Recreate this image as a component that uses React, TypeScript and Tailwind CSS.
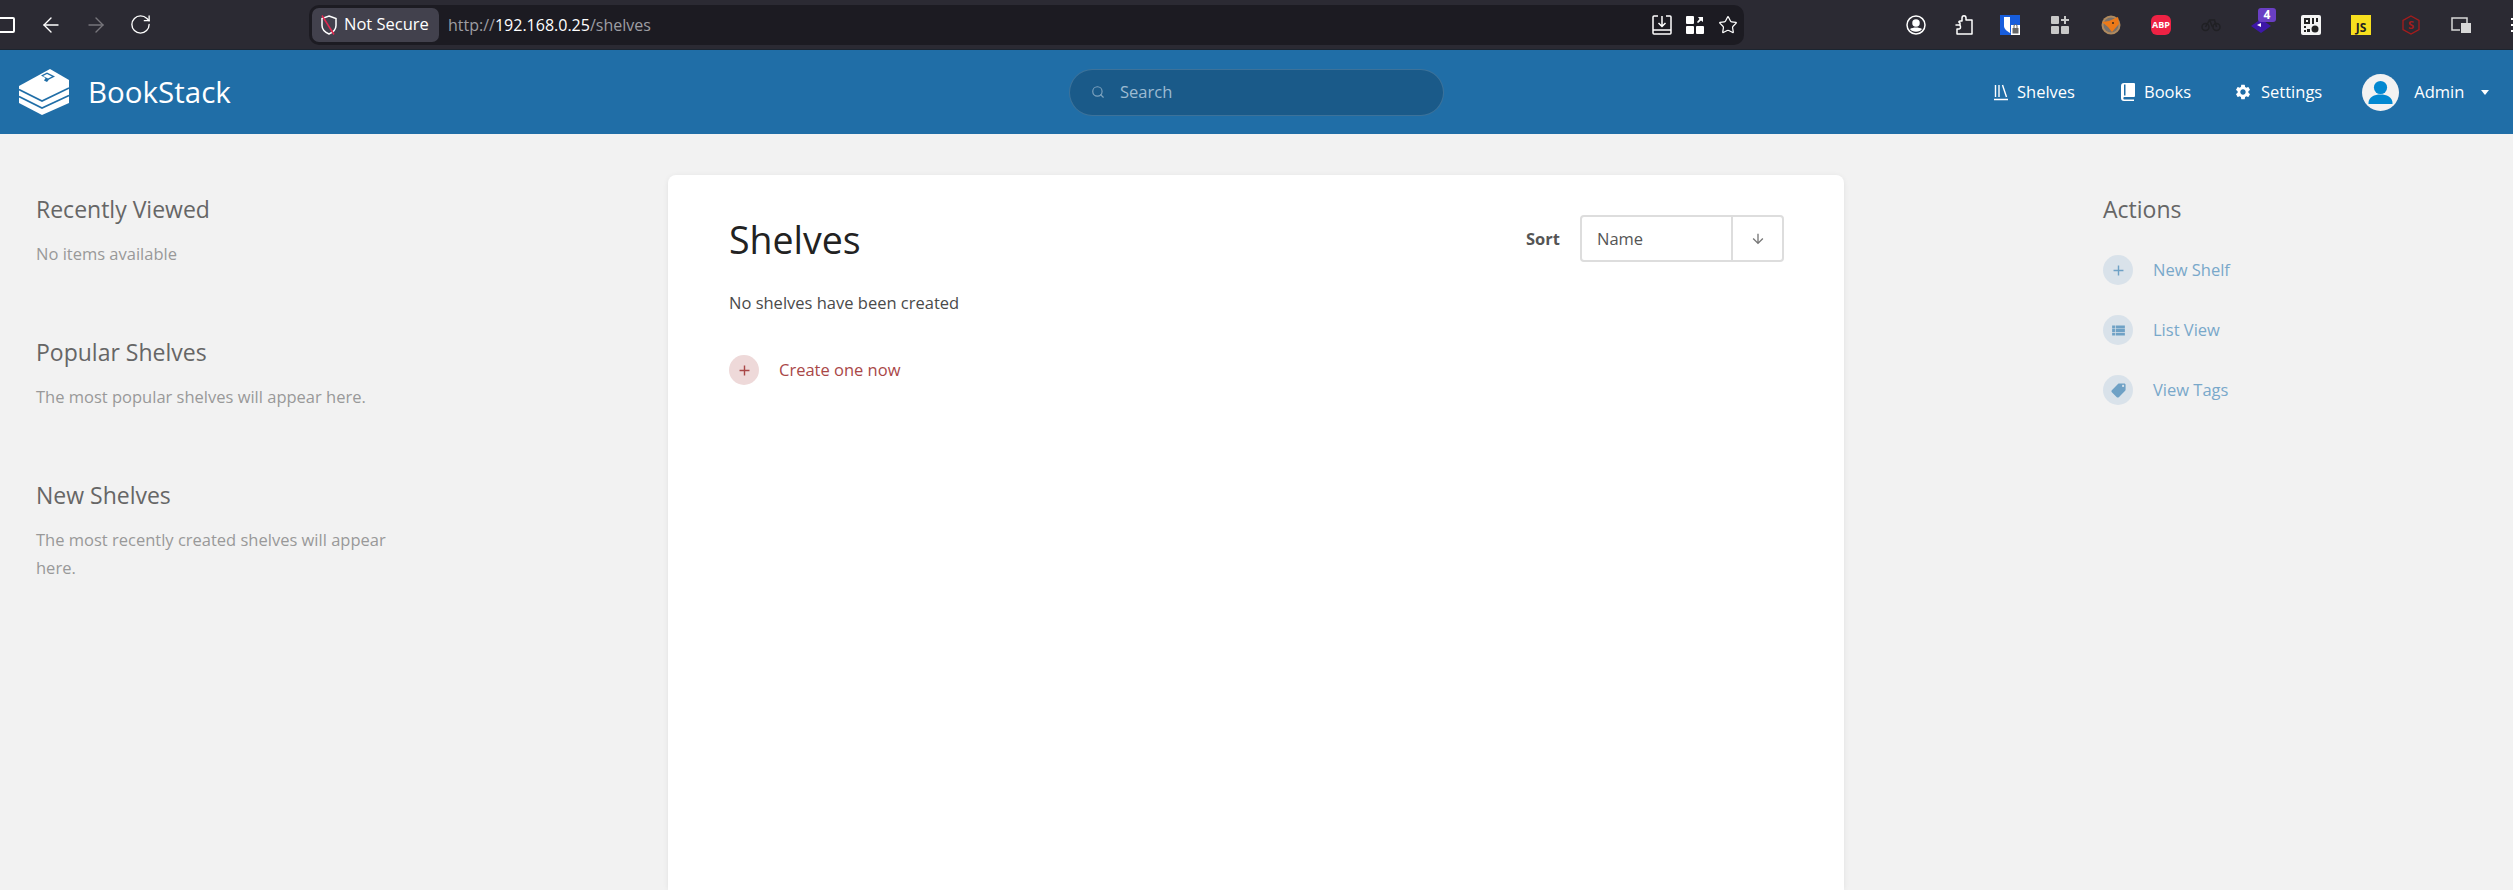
import { ArrowLeft, ArrowRight, RotateCw, Star, Search } from "lucide-react";
import { MdSettings, MdLocalOffer, MdViewList, MdArrowDownward, MdAdd } from "react-icons/md";

function Logo() {
  return (
    <svg width="51" height="48" viewBox="0 0 51 48" className="shrink-0">
      <polygon points="31,1 50,12 50,35 23,47 0,35 0,18" fill="#fff" />
      <polyline points="0,21.5 23,33 50,20" fill="none" stroke="#206ea7" strokeWidth="1.6" />
      <polyline points="0,28.5 23,40 50,27.5" fill="none" stroke="#206ea7" strokeWidth="1.6" />
      <polygon points="22,7.5 28,4.5 36,8.5 30,11.5 28,14 25,12.5 26.5,10" fill="#206ea7" />
      <polygon points="24,8 28,6 33,8.5 29,10.5" fill="#fff" />
    </svg>
  );
}

function ShelvesIcon() {
  return (
    <svg width="14" height="17" viewBox="0 0 14 17" fill="none" stroke="#fff" strokeWidth="1.4">
      <path d="M1.5 1v12M5 1v12M8.5 1l4 12M0 15.5h14" />
    </svg>
  );
}

function BooksIcon() {
  return (
    <svg width="14" height="18" viewBox="0 0 14 18" fill="#fff">
      <path d="M3 0h10a1 1 0 0 1 1 1v12a1 1 0 0 1-1 1H3a1.5 1.5 0 0 0 0 2.5h10V18H3a3 3 0 0 1-3-3V3a3 3 0 0 1 3-3z" />
      <path d="M3 1.5h1.5V12.4H3z" fill="#206ea7" />
    </svg>
  );
}

function Avatar() {
  return (
    <svg width="37" height="37" viewBox="0 0 37 37" className="shrink-0">
      <circle cx="18.5" cy="18.5" r="18.5" fill="#f2f2f2" />
      <circle cx="18.5" cy="13.5" r="6.6" fill="#0288d1" />
      <path d="M6.5 29c0-6 6-8.5 12-8.5s12 2.5 12 8.5v1h-24z" fill="#0288d1" />
    </svg>
  );
}

function ToolbarIcons() {
  return (
    <div className="flex items-center">
      {/* account */}
      <span className="flex w-[50px] justify-center">
        <svg width="20" height="20" viewBox="0 0 20 20" fill="none" stroke="#fff" strokeWidth="1.5">
          <circle cx="10" cy="10" r="9" />
          <circle cx="10" cy="8" r="3" fill="#fff" />
          <path d="M4 14c3-2 9-2 12 0-2 3.5-10 3.5-12 0z" fill="#fff" stroke="none" />
        </svg>
      </span>
      {/* extensions */}
      <span className="flex w-[45px] justify-center">
        <svg width="18" height="20" viewBox="0 0 18 20" fill="none" stroke="#fff" strokeWidth="1.5" strokeLinejoin="round">
          <path d="M1 10h4V8c-2-1-1-2 .5-2H7V3c0-3 4-3 4 0v2h6v14H2V14h2c2 0 2-4 0-4z" />
        </svg>
      </span>
      {/* bitwarden style */}
      <span className="flex w-[48px] justify-center">
        <svg width="20" height="20" viewBox="0 0 20 20">
          <rect width="20" height="20" fill="#175ddc" />
          <path d="M4 2h12v9c0 3-3 5-6 7-3-2-6-4-6-7z" fill="#fff" />
          <path d="M10 2h6v9c0 3-3 5-6 7z" fill="#175ddc" />
          <rect x="11" y="10" width="9" height="10" fill="#fff" />
          <rect x="12.5" y="13" width="6" height="5.5" fill="#666" />
          <path d="M14 13v-2a1.5 1.5 0 0 1 3 0v2" fill="none" stroke="#666" strokeWidth="1" />
        </svg>
      </span>
      {/* add-on grid */}
      <span className="flex w-[52px] justify-center">
        <svg width="18" height="18" viewBox="0 0 18 18" fill="#c8c8c8">
          <rect width="8" height="8" rx="1" />
          <rect y="10" width="8" height="8" rx="1" />
          <rect x="10" y="10" width="8" height="8" rx="1" />
          <path d="M13 0h2v3h3v2h-3v3h-2V5h-3V3h3z" />
        </svg>
      </span>
      {/* fox */}
      <span className="flex w-[50px] justify-center">
        <svg width="20" height="20" viewBox="0 0 20 20">
          <circle cx="10" cy="10" r="9.5" fill="#b08a5e" />
          <circle cx="10" cy="10" r="7.5" fill="#77706c" />
          <path d="M1 7l7-1 9-4 1 7-7 8-4-5z" fill="#ee7a18" />
          <circle cx="12" cy="8" r="1" fill="#3a2a1c" />
        </svg>
      </span>
      {/* adblock */}
      <span className="flex w-[50px] justify-center">
        <span className="flex h-5 w-5 items-center justify-center rounded-md bg-[#ee2244] text-[9px] leading-none font-bold text-white">ABP</span>
      </span>
      {/* faint bike */}
      <span className="flex w-[50px] justify-center">
        <svg width="20" height="18" viewBox="0 0 20 18" fill="none" stroke="#202024" strokeWidth="1.5">
          <circle cx="4.5" cy="11" r="3.5" />
          <circle cx="15.5" cy="11" r="3.5" />
          <path d="M4.5 11l4-7h5l2 7M8.5 4l3 7" />
        </svg>
      </span>
      {/* badge */}
      <span className="flex w-[50px] justify-center">
        <span className="relative h-5 w-5">
          <svg width="20" height="20" viewBox="0 0 20 20" className="absolute top-0 left-0">
            <polygon points="10,4 20,11 10,18 0,11" fill="#3d17a8" />
            <path d="M6 10l4-2v4z" fill="#fff" />
          </svg>
          <span className="absolute -top-[7px] left-[7px] flex h-[14px] w-[18px] items-center justify-center rounded-[3px] bg-[#6a3fc4] text-[12px] leading-none font-bold text-white">4</span>
        </span>
      </span>
      {/* qr */}
      <span className="flex w-[50px] justify-center">
        <svg width="20" height="20" viewBox="0 0 20 20">
          <rect width="20" height="20" rx="2" fill="#f4f4f4" />
          <path d="M3 3h6v6H3zM5 5v2h2V5zM11 3h2v6h-2zM15 3h2v4h-2zM3 11h2v2H3zM6 14h3v3H6zM3 15h2v2H3z" fill="#222" fillRule="evenodd" />
          <circle cx="14" cy="14" r="3.5" fill="#222" />
        </svg>
      </span>
      {/* js */}
      <span className="flex w-[50px] justify-center">
        <span className="flex h-5 w-5 items-end justify-center bg-[#f7df1e] text-[12px] leading-[15px] font-bold text-[#222]">JS</span>
      </span>
      {/* s hexagon */}
      <span className="flex w-[50px] justify-center">
        <span className="relative flex h-5 w-5 items-center justify-center text-[11px] leading-none font-bold text-[#a61c1c]">
          <svg width="20" height="20" viewBox="0 0 20 20" fill="none" stroke="#a61c1c" strokeWidth="1.3" className="absolute inset-0">
            <polygon points="10,1 18,5.5 18,14.5 10,19 2,14.5 2,5.5" />
          </svg>
          S
        </span>
      </span>
      {/* pip */}
      <span className="flex w-[50px] justify-center">
        <svg width="20" height="18" viewBox="0 0 20 18" fill="none" stroke="#d8d8d8" strokeWidth="1.5">
          <path d="M9 14H1V2h15v5" />
          <rect x="10" y="7" width="10" height="10" fill="#d8d8d8" stroke="none" />
        </svg>
      </span>
      <span className="ml-[25px] flex w-[16px] flex-col gap-[4px]">
        <span className="h-[2px] w-[16px] bg-white" />
        <span className="h-[2px] w-[16px] bg-white" />
        <span className="h-[2px] w-[16px] bg-white" />
      </span>
    </div>
  );
}

function BrowserBar() {
  return (
    <div className="flex h-[50px] shrink-0 items-center overflow-hidden border-b border-[#1c2530] bg-[#2b2a33] text-white">
      <span className="ml-[-6px] h-[16px] w-[21px] shrink-0 rounded-[2px] border-2 border-white" />
      <ArrowLeft size={24} strokeWidth={1.4} className="ml-[24px] shrink-0" />
      <ArrowRight size={24} strokeWidth={1.4} className="ml-[21px] shrink-0 text-[#77767c]" />
      <RotateCw size={23} strokeWidth={1.4} className="ml-[21px] shrink-0" />
      <div className="ml-[157px] flex h-[40px] w-[1435px] shrink-0 items-center rounded-[10px] bg-[#1c1b22] pl-[3px]">
        <div className="flex h-[34px] w-[127px] items-center rounded-[7px] bg-[#42414d] pl-[7px] text-[16.5px]">
          <svg width="20" height="22" viewBox="0 0 20 22" fill="none" className="mr-[5px] shrink-0">
            <path d="M10 2l7 2.5v7c0 4-3.5 7-7 8.5-3.5-1.5-7-4.5-7-8.5v-7z" stroke="#fff" strokeWidth="1.5" />
            <path d="M3 1.5l12 19" stroke="#e22850" strokeWidth="1.5" />
          </svg>
          Not Secure
        </div>
        <div className="ml-[9px] text-[16px] text-[#9e9ea3]">
          http://<span className="text-white">192.168.0.25</span>/shelves
        </div>
        <div className="ml-auto mr-[6px] flex items-center gap-[14px]">
          <svg width="20" height="20" viewBox="0 0 20 20" fill="none" stroke="#fff" strokeWidth="1.5">
            <path d="M6 1H2a1 1 0 0 0-1 1v16a1 1 0 0 0 1 1h16a1 1 0 0 0 1-1V2a1 1 0 0 0-1-1h-4" />
            <path d="M1 15h18M10 1v10M6.5 8l3.5 3.5L13.5 8" />
          </svg>
          <svg width="18" height="18" viewBox="0 0 18 18" fill="#fff">
            <rect width="8" height="8" rx="1" />
            <rect y="10" width="8" height="8" rx="1" />
            <rect x="10" y="10" width="8" height="8" rx="1" />
            <path d="M12 1h5v5l-2-1.5L12 7l-1-1 2.5-3z" />
          </svg>
          <Star size={20} strokeWidth={1.5} />
        </div>
      </div>
      <div className="ml-[147px] shrink-0">
        <ToolbarIcons />
      </div>
    </div>
  );
}

function Header() {
  return (
    <header className="flex h-[84px] shrink-0 items-center bg-[#206ea7] text-white">
      <div className="flex w-[1069px] items-center pl-[19px]">
        <Logo />
        <span className="ml-[18px] text-[29.5px] leading-none">BookStack</span>
      </div>
      <div className="flex h-[47px] w-[375px] items-center rounded-full border border-[#ffffff26] bg-[#1a5a89] pl-[21px] text-[16.5px] text-[#9dbbd2]">
        <Search size={14} strokeWidth={2} className="text-[#7ea3bf]" />
        <span className="ml-[15px]">Search</span>
      </div>
      <nav className="ml-[550px] flex items-center text-[16.5px]">
        <span className="flex items-center gap-[9px]"><ShelvesIcon />Shelves</span>
        <span className="ml-[46px] flex items-center gap-[9px]"><BooksIcon />Books</span>
        <span className="ml-[43px] flex items-center gap-[9px]"><MdSettings size={18} />Settings</span>
        <span className="ml-[40px] flex items-center"><Avatar /><span className="ml-[15px]">Admin</span></span>
        <span className="ml-[17px] h-0 w-0 border-x-[4px] border-t-[5px] border-x-transparent border-t-white" />
      </nav>
    </header>
  );
}

function SideBlock({ title, children, className }: { title: string; children: React.ReactNode; className?: string }) {
  return (
    <section className={className}>
      <h5 className="text-[23px] leading-[30px] text-[#666]">{title}</h5>
      <p className="mt-[16px] text-[16.5px] leading-[28px] text-[#999]">{children}</p>
    </section>
  );
}

function ActionLink({ icon, label }: { icon: React.ReactNode; label: string }) {
  return (
    <div className="flex h-[30px] items-center text-[16.5px] text-[#79a8ca]">
      <span className="flex h-[30px] w-[30px] items-center justify-center rounded-full bg-[#d9e2ea] text-[#6fa1c5]">{icon}</span>
      <span className="ml-[20px]">{label}</span>
    </div>
  );
}

export default function App() {
  return (
    <div className="flex h-[890px] flex-col overflow-hidden bg-[#f2f2f2] font-['Open_Sans','Noto_Sans',sans-serif]">
      <BrowserBar />
      <Header />
      <main className="flex min-h-0 flex-1">
        <aside className="w-[668px] shrink-0 pt-[60px] pl-[36px]">
          <div className="w-[360px]">
            <SideBlock title="Recently Viewed">No items available</SideBlock>
            <SideBlock title="Popular Shelves" className="mt-[69px]">The most popular shelves will appear here.</SideBlock>
            <SideBlock title="New Shelves" className="mt-[69px]">The most recently created shelves will appear here.</SideBlock>
          </div>
        </aside>
        <div className="mt-[41px] w-[1176px] shrink-0 rounded-t-[8px] bg-white pt-[40px] pr-[60px] pl-[61px] shadow-[0_1px_6px_-1px_rgba(0,0,0,0.1)]">
          <div className="flex items-start justify-between">
            <h1 className="text-[37.5px] leading-[50px] text-[#222]">Shelves</h1>
            <div className="flex items-center">
              <span className="mt-[1px] mr-[20px] text-[16.5px] font-bold text-[#555]">Sort</span>
              <div className="flex h-[47px] w-[204px] items-center rounded-[4px] border-2 border-[#ddd] text-[16.5px] text-[#555]">
                <span className="w-[151px] border-r-2 border-[#ddd] pl-[15px] leading-[43px]">Name</span>
                <span className="flex flex-1 justify-center text-[#777]"><MdArrowDownward size={16} /></span>
              </div>
            </div>
          </div>
          <p className="mt-[24px] text-[16.5px] leading-[28px] text-[#4a4a4a]">No shelves have been created</p>
          <div className="mt-[38px] flex h-[30px] items-center text-[16.5px] text-[#a94747]">
            <span className="flex h-[30px] w-[30px] items-center justify-center rounded-full bg-[#eed9d9]"><MdAdd size={17} /></span>
            <span className="ml-[20px]">Create one now</span>
          </div>
        </div>
        <aside className="flex-1 pt-[60px] pl-[259px]">
          <h5 className="text-[23px] leading-[30px] text-[#666]">Actions</h5>
          <div className="mt-[31px] flex flex-col gap-[30px]">
            <ActionLink icon={<MdAdd size={17} />} label="New Shelf" />
            <ActionLink icon={<MdViewList size={17} />} label="List View" />
            <ActionLink icon={<MdLocalOffer size={17} className="-scale-x-100" />} label="View Tags" />
          </div>
        </aside>
      </main>
    </div>
  );
}
